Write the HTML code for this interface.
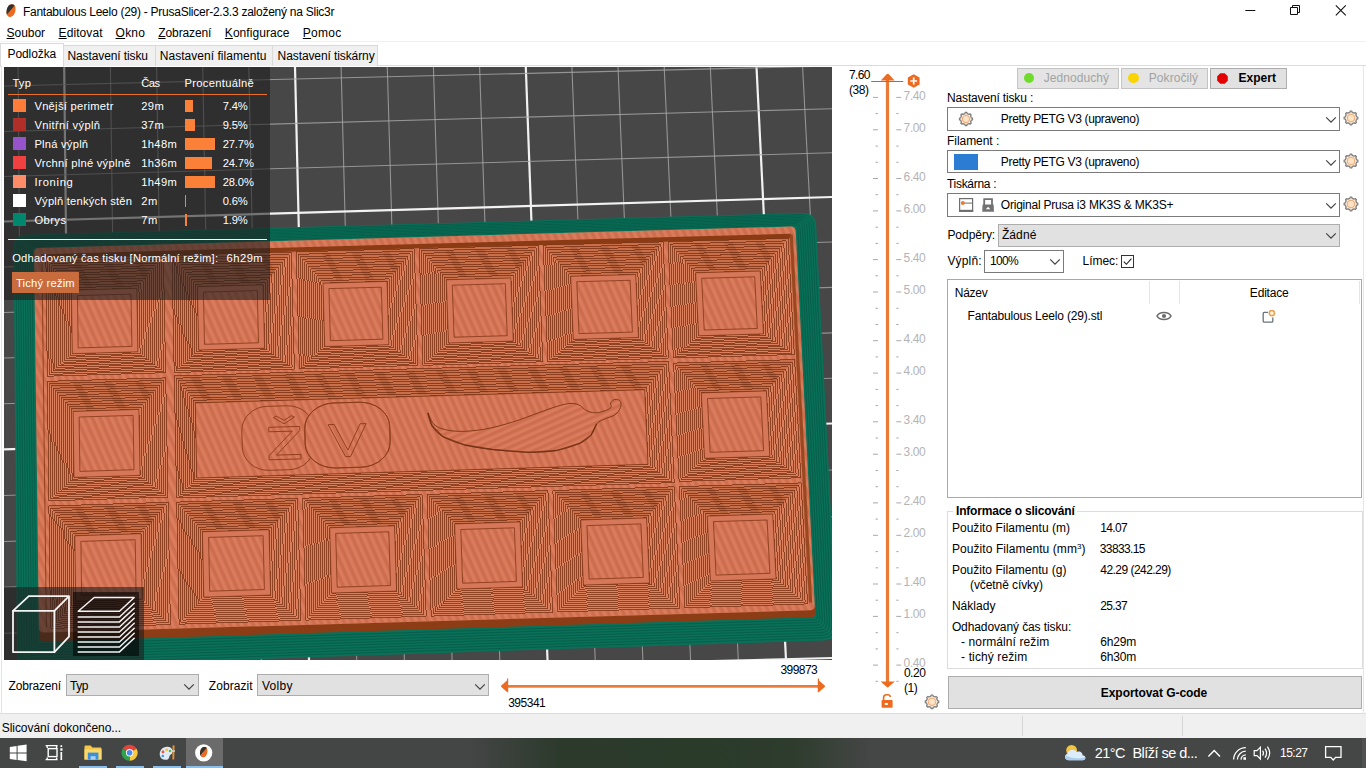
<!DOCTYPE html><html><head><meta charset="utf-8"><title>PrusaSlicer</title><style>
html,body{margin:0;padding:0}
body{width:1366px;height:776px;position:relative;overflow:hidden;background:#fff;font-family:"Liberation Sans",sans-serif;font-size:12px;color:#000}
.a{position:absolute}
.t{position:absolute;white-space:nowrap;line-height:16px;height:16px}
u{text-decoration:underline;text-underline-offset:1px}
.btn{position:absolute;background:#e1e1e1;border:1px solid #adadad;box-sizing:border-box}
.cmb{position:absolute;background:#fff;border:1px solid #7a7a7a;box-sizing:border-box}
</style></head><body>
<div class="a" style="left:0;top:0;width:1366px;height:738px;background:#fff"></div>
<svg class="a" style="left:5.0px;top:4.0px" width="12.5" height="13.5" viewBox="0 0 10 13"><defs><clipPath id="lg"><path d="M5.6 0.2 C8.6 0.2 9.6 3.4 9 6.6 C8.5 9.6 6.6 12.6 3.6 12.4 C0.8 12.2 0 9 0.6 6 C1.2 3 2.8 0.2 5.6 0.2 Z"/></clipPath></defs><g clip-path="url(#lg)"><rect width="10" height="13" fill="#ed6b21"/><path d="M-1 -1 H10.5 L0.3 10.6 L-1 10 Z" fill="#2e3233"/></g></svg>
<svg class="a" style="left:1240px;top:0" width="120" height="22" viewBox="0 0 120 22"><path d="M5.3 10.5 H15.3" stroke="#111" stroke-width="1"/><path d="M50.5 7.5 H57.5 V14.5 H50.5 Z M52.5 7.5 V5.5 H59.5 V12.5 H57.5" fill="none" stroke="#111" stroke-width="1"/><path d="M95.8 5.3 L105.8 15.3 M105.8 5.3 L95.8 15.3" stroke="#111" stroke-width="1.1"/></svg>
<div class="a" style="left:0;top:41px;width:1366px;height:2px;background:#f1f1f1"></div>
<div class="a" style="left:0;top:42px;width:1366px;height:24px;background:#fff"></div>
<div class="a" style="left:0;top:65px;width:1366px;height:1px;background:#dcdcdc"></div>
<div class="a" style="left:63px;top:45px;width:315px;height:21px;background:#f0f0f0;border:1px solid #dadada;border-bottom:none;box-sizing:border-box"></div>
<div class="a" style="left:154.5px;top:45px;width:1px;height:21px;background:#dadada"></div>
<div class="a" style="left:271.7px;top:45px;width:1px;height:21px;background:#dadada"></div>
<div class="a" style="left:0;top:43px;width:64px;height:24px;background:#fff;border:1px solid #dadada;border-bottom:none;box-sizing:border-box"></div>
<div class="a" style="left:1px;top:66px;width:1px;height:648px;background:#e3e3e3"></div>
<div class="a" style="left:0;top:713px;width:1366px;height:1px;background:#dcdcdc"></div>
<div class="a" style="left:0;top:714px;width:1366px;height:24px;background:#f0f0f0"></div>
<div class="a" style="left:1022px;top:716px;width:1px;height:20px;background:#d7d7d7"></div>
<div class="a" style="left:1182px;top:716px;width:1px;height:20px;background:#d7d7d7"></div>
<svg width="1366" height="776" viewBox="0 0 1366 776" style="position:absolute;left:0;top:0">
<defs>
<clipPath id="cv"><rect x="4" y="67" width="828" height="593"/></clipPath>
<pattern id="stripe" width="7" height="7" patternUnits="userSpaceOnUse" patternTransform="rotate(66)"><rect x="0" y="0" width="7" height="3.5" fill="#b95a3c" opacity="0.42"/></pattern>
<pattern id="stripe2" width="6.4" height="6.4" patternUnits="userSpaceOnUse" patternTransform="rotate(-24)"><rect x="0" y="0" width="6.4" height="3.2" fill="#b95a3c" opacity="0.42"/></pattern>
<style>.gt{stroke:#a8a8a8;stroke-width:1.1;opacity:.8}.gT{stroke:#f2f2f2;stroke-width:2.2}</style>
</defs>
<g clip-path="url(#cv)">
<rect x="4" y="67" width="828" height="593" fill="#474747"/>
<line x1="-28.1" y1="67" x2="-24.9" y2="660" class="gt"/>
<line x1="18.1" y1="67" x2="22.8" y2="660" class="gt"/>
<line x1="64.2" y1="67" x2="70.5" y2="660" class="gT"/>
<line x1="110.4" y1="67" x2="118.2" y2="660" class="gt"/>
<line x1="156.6" y1="67" x2="165.9" y2="660" class="gt"/>
<line x1="202.7" y1="67" x2="213.6" y2="660" class="gt"/>
<line x1="248.8" y1="67" x2="261.3" y2="660" class="gt"/>
<line x1="295.0" y1="67" x2="309.0" y2="660" class="gT"/>
<line x1="341.1" y1="67" x2="356.7" y2="660" class="gt"/>
<line x1="387.3" y1="67" x2="404.4" y2="660" class="gt"/>
<line x1="433.4" y1="67" x2="452.1" y2="660" class="gt"/>
<line x1="479.6" y1="67" x2="499.8" y2="660" class="gt"/>
<line x1="525.8" y1="67" x2="547.5" y2="660" class="gT"/>
<line x1="571.9" y1="67" x2="595.2" y2="660" class="gt"/>
<line x1="618.0" y1="67" x2="642.9" y2="660" class="gt"/>
<line x1="664.2" y1="67" x2="690.6" y2="660" class="gt"/>
<line x1="710.3" y1="67" x2="738.3" y2="660" class="gt"/>
<line x1="756.5" y1="67" x2="786.0" y2="660" class="gT"/>
<line x1="802.6" y1="67" x2="833.7" y2="660" class="gt"/>
<line x1="848.8" y1="67" x2="881.4" y2="660" class="gt"/>
<line x1="4" y1="41.0" x2="832" y2="23.0" class="gt"/>
<line x1="4" y1="86.0" x2="832" y2="66.0" class="gt"/>
<line x1="4" y1="131.5" x2="832" y2="108.7" class="gt"/>
<line x1="4" y1="176.5" x2="832" y2="152.7" class="gt"/>
<line x1="4" y1="221.5" x2="832" y2="197.0" class="gT"/>
<line x1="4" y1="267.0" x2="832" y2="242.0" class="gt"/>
<line x1="4" y1="312.5" x2="832" y2="287.4" class="gt"/>
<line x1="4" y1="358.0" x2="832" y2="332.9" class="gt"/>
<line x1="4" y1="403.7" x2="832" y2="378.2" class="gt"/>
<line x1="4" y1="449.4" x2="832" y2="423.5" class="gT"/>
<line x1="4" y1="495.5" x2="832" y2="470.0" class="gt"/>
<line x1="4" y1="541.5" x2="832" y2="516.8" class="gt"/>
<line x1="4" y1="587.3" x2="832" y2="563.7" class="gt"/>
<line x1="4" y1="633.2" x2="832" y2="610.7" class="gt"/>
<line x1="4" y1="679.5" x2="832" y2="658.0" class="gT"/>
<path d="M13.6 248.0 Q13.5 235.0 26.5 234.6 L802.5 213.0 Q815.5 212.6 816.2 225.6 L836.8 627.0 Q837.5 640.0 824.5 640.4 L30.0 666.6 Q17.0 667.0 16.9 654.0 Z" fill="#0a7058"/>
<path d="M15.9 249.0 Q15.8 236.4 28.3 236.1 L800.7 214.5 Q813.3 214.1 813.9 226.7 L834.4 624.9 Q835.0 637.5 822.5 637.9 L32.0 663.8 Q19.4 664.2 19.3 651.6 Z" fill="none" stroke="#065a47" stroke-width="0.9" opacity="0.85"/>
<path d="M18.2 249.0 Q18.1 237.9 29.2 237.6 L799.9 216.0 Q811.0 215.7 811.6 226.8 L831.9 623.8 Q832.5 634.9 821.4 635.3 L33.0 661.0 Q21.9 661.4 21.8 650.2 Z" fill="none" stroke="#065a47" stroke-width="0.9" opacity="0.85"/>
<path d="M20.4 249.0 Q20.3 239.3 30.0 239.1 L799.1 217.5 Q808.8 217.2 809.3 226.9 L829.5 622.7 Q830.0 632.4 820.3 632.7 L34.0 658.2 Q24.3 658.5 24.2 648.9 Z" fill="none" stroke="#065a47" stroke-width="0.9" opacity="0.85"/>
<path d="M22.7 249.0 Q22.6 240.8 30.8 240.5 L798.3 219.0 Q806.6 218.8 807.0 227.0 L827.1 621.7 Q827.5 629.9 819.3 630.1 L35.0 655.4 Q26.8 655.7 26.7 647.5 Z" fill="none" stroke="#065a47" stroke-width="0.9" opacity="0.85"/>
<path d="M25.0 249.0 Q24.9 242.2 31.7 242.0 L797.6 220.5 Q804.3 220.3 804.7 227.1 L824.7 620.6 Q825.0 627.3 818.2 627.6 L36.0 652.7 Q29.2 652.9 29.2 646.1 Z" fill="none" stroke="#065a47" stroke-width="0.9" opacity="0.85"/>
<path d="M27.2 249.0 Q27.2 243.7 32.5 243.5 L796.8 222.0 Q802.1 221.9 802.4 227.2 L822.2 619.5 Q822.5 624.8 817.2 625.0 L37.0 649.9 Q31.7 650.1 31.6 644.7 Z" fill="none" stroke="#065a47" stroke-width="0.9" opacity="0.85"/>
<path d="M29.5 249.0 Q29.4 245.1 33.3 245.0 L796.0 223.5 Q799.9 223.4 800.1 227.3 L819.8 618.4 Q820.0 622.3 816.1 622.4 L38.0 647.1 Q34.1 647.2 34.1 643.4 Z" fill="none" stroke="#065a47" stroke-width="0.9" opacity="0.85"/>
<path d="M31.8 249.0 Q31.7 246.6 34.2 246.5 L795.2 225.0 Q797.6 225.0 797.8 227.4 L817.4 617.3 Q817.5 619.7 815.1 619.8 L39.0 644.3 Q36.6 644.4 36.5 642.0 Z" fill="none" stroke="#065a47" stroke-width="0.9" opacity="0.85"/>
<path d="M39.2 630.6 Q39.0 626.6 43.0 626.5 L811.0 604.3 Q815.0 604.2 815.2 608.2 L815.3 613.2 Q815.5 617.2 811.5 617.3 L43.8 641.5 Q39.8 641.6 39.6 637.6 Z" fill="#8c3d16"/>
<path d="M34.1 253.0 Q34.0 248.0 39.0 247.9 L790.4 226.6 Q795.4 226.5 795.7 231.5 L814.7 605.2 Q815.0 610.2 810.0 610.3 L44.0 632.5 Q39.0 632.6 38.9 627.6 Z" fill="#da7c5c"/>
<path d="M34.1 253.0 Q34.0 248.0 39.0 247.9 L790.4 226.6 Q795.4 226.5 795.7 231.5 L814.7 605.2 Q815.0 610.2 810.0 610.3 L44.0 632.5 Q39.0 632.6 38.9 627.6 Z" fill="url(#stripe)"/>
<polygon points="42.1,258.8 789.6,238.4 809.0,602.6 46.6,627.3" fill="#dc7e5d"/>
<polygon points="42.1,258.8 789.6,238.4 809.0,602.6 46.6,627.3" fill="url(#stripe)"/>
<polygon points="41.1,254.2 791.1,233.8 791.1,238.2 41.1,258.6" fill="#8a3b14"/>
<polygon points="789.6,234.4 792.8,234.4 812.2,602.6 809.0,602.6" fill="#9a4820"/>
<path d="M41.9 255.8 L46.4 627.3" stroke="#8a3b14" stroke-width="0.9"/>
<polygon points="45.9,258.7 163.4,255.5 165.6,372.7 47.3,376.2" fill="#db7f5c"/>
<polygon points="172.0,255.3 291.3,252.0 294.4,369.0 174.2,372.5" fill="#db7f5c"/>
<polygon points="296.3,251.9 414.2,248.6 418.0,365.4 299.4,368.9" fill="#db7f5c"/>
<polygon points="419.2,248.5 538.2,245.3 542.8,361.8 423.0,365.3" fill="#db7f5c"/>
<polygon points="543.2,245.1 663.0,241.9 668.4,358.2 547.8,361.7" fill="#db7f5c"/>
<polygon points="668.0,241.7 788.1,238.4 794.3,354.5 673.4,358.0" fill="#db7f5c"/>
<polygon points="47.4,381.3 165.7,377.9 168.0,497.1 48.9,500.8" fill="#db7f5c"/>
<polygon points="673.6,363.1 794.6,359.6 800.8,477.7 679.1,481.4" fill="#db7f5c"/>
<polygon points="48.9,506.0 168.1,502.3 170.4,624.5 50.5,628.4" fill="#db7f5c"/>
<polygon points="176.7,502.1 297.7,498.3 300.8,620.3 179.1,624.2" fill="#db7f5c"/>
<polygon points="302.7,498.2 422.2,494.5 426.2,616.2 305.9,620.1" fill="#db7f5c"/>
<polygon points="427.2,494.4 547.9,490.6 552.6,612.1 431.2,616.1" fill="#db7f5c"/>
<polygon points="552.9,490.5 674.3,486.8 680.0,608.0 557.7,612.0" fill="#db7f5c"/>
<polygon points="679.4,486.6 801.1,482.9 807.5,603.9 685.0,607.8" fill="#db7f5c"/>
<polygon points="174.3,375.8 668.5,361.4 674.2,482.6 176.6,497.9" fill="#db7f5c"/>
<polygon points="45.9,258.7 163.4,255.5 136.8,288.3 71.4,290.2" fill="#8a3b14" opacity="0.22"/>
<polygon points="172.0,255.3 291.3,252.0 263.1,284.8 197.4,286.7" fill="#8a3b14" opacity="0.22"/>
<polygon points="296.3,251.9 414.2,248.6 387.0,281.4 323.0,283.2" fill="#8a3b14" opacity="0.22"/>
<polygon points="419.2,248.5 538.2,245.3 510.9,278.0 446.3,279.8" fill="#8a3b14" opacity="0.22"/>
<polygon points="543.2,245.1 663.0,241.9 635.7,274.5 570.7,276.3" fill="#8a3b14" opacity="0.22"/>
<polygon points="668.0,241.7 788.1,238.4 760.2,271.0 695.6,272.8" fill="#8a3b14" opacity="0.22"/>
<polygon points="47.4,381.3 165.7,377.9 138.9,409.4 73.1,411.4" fill="#8a3b14" opacity="0.22"/>
<polygon points="673.6,363.1 794.6,359.6 766.4,390.9 701.3,392.9" fill="#8a3b14" opacity="0.22"/>
<polygon points="48.9,506.0 168.1,502.3 141.1,533.7 74.8,535.8" fill="#8a3b14" opacity="0.22"/>
<polygon points="176.7,502.1 297.7,498.3 269.0,529.7 202.4,531.8" fill="#8a3b14" opacity="0.22"/>
<polygon points="302.7,498.2 422.2,494.5 394.5,525.8 329.7,527.8" fill="#8a3b14" opacity="0.22"/>
<polygon points="427.2,494.4 547.9,490.6 520.1,521.9 454.6,523.9" fill="#8a3b14" opacity="0.22"/>
<polygon points="552.9,490.5 674.3,486.8 646.6,517.9 580.7,520.0" fill="#8a3b14" opacity="0.22"/>
<polygon points="679.4,486.6 801.1,482.9 772.7,514.0 707.2,516.1" fill="#8a3b14" opacity="0.22"/>
<polygon points="174.3,375.8 668.5,361.4 644.7,389.7 195.3,402.9" fill="#8a3b14" opacity="0.22"/>
<g fill="none" stroke="#702a0c" stroke-width="0.8" opacity="0.88" shape-rendering="crispEdges">
<polygon points="45.9,258.7 163.4,255.5 165.6,372.7 47.3,376.2"/>
<polygon points="47.8,261.1 161.4,258.0 163.5,371.1 49.2,374.4"/>
<polygon points="49.8,263.5 159.3,260.5 161.4,369.5 51.2,372.7"/>
<polygon points="51.8,266.0 157.3,263.1 159.2,367.9 53.1,371.0"/>
<polygon points="53.7,268.4 155.2,265.6 157.1,366.3 55.0,369.3"/>
<polygon points="55.7,270.8 153.2,268.1 155.0,364.7 56.9,367.5"/>
<polygon points="57.7,273.2 151.2,270.6 152.8,363.1 58.9,365.8"/>
<polygon points="59.6,275.6 149.1,273.2 150.7,361.5 60.8,364.1"/>
<polygon points="61.6,278.1 147.1,275.7 148.6,359.9 62.7,362.4"/>
<polygon points="63.6,280.5 145.0,278.2 146.5,358.3 64.6,360.6"/>
<polygon points="65.5,282.9 143.0,280.8 144.3,356.7 66.5,358.9"/>
<polygon points="67.5,285.3 140.9,283.3 142.2,355.1 68.5,357.2"/>
<polygon points="69.5,287.7 138.9,285.8 140.1,353.5 70.4,355.4"/>
<polygon points="71.4,290.2 136.8,288.3 137.9,351.8 72.3,353.7"/>
<polygon points="172.0,255.3 291.3,252.0 294.4,369.0 174.2,372.5"/>
<polygon points="173.9,257.7 289.2,254.5 292.1,367.4 176.1,370.8"/>
<polygon points="175.9,260.1 287.0,257.0 289.8,365.8 178.0,369.0"/>
<polygon points="177.8,262.5 284.8,259.6 287.5,364.2 179.9,367.3"/>
<polygon points="179.8,264.9 282.7,262.1 285.2,362.6 181.8,365.6"/>
<polygon points="181.7,267.3 280.5,264.6 282.9,361.0 183.6,363.9"/>
<polygon points="183.7,269.8 278.3,267.2 280.6,359.4 185.5,362.2"/>
<polygon points="185.6,272.2 276.1,269.7 278.3,357.8 187.4,360.4"/>
<polygon points="187.6,274.6 274.0,272.2 276.0,356.2 189.3,358.7"/>
<polygon points="189.5,277.0 271.8,274.7 273.8,354.6 191.2,357.0"/>
<polygon points="191.5,279.4 269.6,277.3 271.5,353.0 193.0,355.3"/>
<polygon points="193.5,281.8 267.4,279.8 269.2,351.4 194.9,353.5"/>
<polygon points="195.4,284.2 265.3,282.3 266.9,349.8 196.8,351.8"/>
<polygon points="197.4,286.7 263.1,284.8 264.6,348.2 198.7,350.1"/>
<polygon points="296.3,251.9 414.2,248.6 418.0,365.4 299.4,368.9"/>
<polygon points="298.4,254.3 412.1,251.2 415.8,363.8 301.3,367.1"/>
<polygon points="300.4,256.7 410.0,253.7 413.5,362.2 303.3,365.4"/>
<polygon points="302.5,259.1 407.9,256.2 411.3,360.6 305.2,363.7"/>
<polygon points="304.5,261.5 405.8,258.7 409.1,359.0 307.2,362.0"/>
<polygon points="306.6,263.9 403.7,261.2 406.8,357.4 309.1,360.3"/>
<polygon points="308.6,266.3 401.6,263.8 404.6,355.8 311.1,358.5"/>
<polygon points="310.7,268.7 399.6,266.3 402.3,354.2 313.0,356.8"/>
<polygon points="312.7,271.1 397.5,268.8 400.1,352.7 315.0,355.1"/>
<polygon points="314.8,273.5 395.4,271.3 397.9,351.1 316.9,353.4"/>
<polygon points="316.8,276.0 393.3,273.8 395.6,349.5 318.9,351.7"/>
<polygon points="318.9,278.4 391.2,276.4 393.4,347.9 320.8,349.9"/>
<polygon points="320.9,280.8 389.1,278.9 391.2,346.3 322.8,348.2"/>
<polygon points="323.0,283.2 387.0,281.4 388.9,344.7 324.7,346.5"/>
<polygon points="419.2,248.5 538.2,245.3 542.8,361.8 423.0,365.3"/>
<polygon points="421.2,250.9 536.1,247.8 540.5,360.2 424.9,363.6"/>
<polygon points="423.3,253.3 534.0,250.3 538.2,358.6 426.9,361.9"/>
<polygon points="425.4,255.7 531.9,252.8 536.0,357.0 428.9,360.1"/>
<polygon points="427.5,258.1 529.8,255.3 533.7,355.4 430.8,358.4"/>
<polygon points="429.6,260.5 527.7,257.8 531.4,353.9 432.8,356.7"/>
<polygon points="431.7,262.9 525.6,260.4 529.2,352.3 434.7,355.0"/>
<polygon points="433.8,265.3 523.5,262.9 526.9,350.7 436.7,353.3"/>
<polygon points="435.8,267.7 521.4,265.4 524.6,349.1 438.7,351.5"/>
<polygon points="437.9,270.1 519.3,267.9 522.3,347.5 440.6,349.8"/>
<polygon points="440.0,272.5 517.2,270.4 520.1,345.9 442.6,348.1"/>
<polygon points="442.1,274.9 515.1,272.9 517.8,344.3 444.5,346.4"/>
<polygon points="444.2,277.4 513.0,275.4 515.5,342.7 446.5,344.7"/>
<polygon points="446.3,279.8 510.9,278.0 513.3,341.1 448.5,343.0"/>
<polygon points="543.2,245.1 663.0,241.9 668.4,358.2 547.8,361.7"/>
<polygon points="545.3,247.5 660.9,244.4 666.1,356.6 549.8,360.0"/>
<polygon points="547.4,249.9 658.8,246.9 663.8,355.0 551.7,358.2"/>
<polygon points="549.5,252.3 656.7,249.4 661.5,353.4 553.7,356.5"/>
<polygon points="551.6,254.7 654.6,251.9 659.2,351.8 555.6,354.8"/>
<polygon points="553.8,257.1 652.5,254.4 656.9,350.2 557.6,353.1"/>
<polygon points="555.9,259.5 650.4,256.9 654.6,348.6 559.6,351.4"/>
<polygon points="558.0,261.9 648.3,259.4 652.3,347.1 561.5,349.7"/>
<polygon points="560.1,264.3 646.2,261.9 650.0,345.5 563.5,348.0"/>
<polygon points="562.2,266.7 644.1,264.5 647.7,343.9 565.5,346.2"/>
<polygon points="564.3,269.1 642.0,267.0 645.4,342.3 567.4,344.5"/>
<polygon points="566.5,271.5 639.9,269.5 643.1,340.7 569.4,342.8"/>
<polygon points="568.6,273.9 637.8,272.0 640.8,339.1 571.3,341.1"/>
<polygon points="570.7,276.3 635.7,274.5 638.5,337.5 573.3,339.4"/>
<polygon points="668.0,241.7 788.1,238.4 794.3,354.5 673.4,358.0"/>
<polygon points="670.1,244.1 786.0,240.9 791.9,353.0 675.3,356.3"/>
<polygon points="672.2,246.5 783.8,243.5 789.5,351.4 677.3,354.6"/>
<polygon points="674.4,248.9 781.7,246.0 787.2,349.8 679.2,352.9"/>
<polygon points="676.5,251.3 779.5,248.5 784.8,348.2 681.2,351.2"/>
<polygon points="678.6,253.7 777.4,251.0 782.4,346.6 683.1,349.5"/>
<polygon points="680.7,256.1 775.2,253.5 780.0,345.0 685.0,347.8"/>
<polygon points="682.8,258.5 773.1,256.0 777.7,343.4 687.0,346.1"/>
<polygon points="685.0,260.9 771.0,258.5 775.3,341.9 688.9,344.3"/>
<polygon points="687.1,263.3 768.8,261.0 772.9,340.3 690.9,342.6"/>
<polygon points="689.2,265.7 766.7,263.5 770.6,338.7 692.8,340.9"/>
<polygon points="691.3,268.1 764.5,266.0 768.2,337.1 694.7,339.2"/>
<polygon points="693.5,270.4 762.4,268.5 765.8,335.5 696.7,337.5"/>
<polygon points="695.6,272.8 760.2,271.0 763.5,333.9 698.6,335.8"/>
<polygon points="47.4,381.3 165.7,377.9 168.0,497.1 48.9,500.8"/>
<polygon points="49.4,383.6 163.7,380.3 165.8,495.4 50.8,499.0"/>
<polygon points="51.3,385.9 161.6,382.7 163.7,493.8 52.7,497.2"/>
<polygon points="53.3,388.2 159.5,385.1 161.5,492.1 54.7,495.4"/>
<polygon points="55.3,390.6 157.5,387.6 159.4,490.4 56.6,493.6"/>
<polygon points="57.3,392.9 155.4,390.0 157.2,488.8 58.5,491.8"/>
<polygon points="59.2,395.2 153.4,392.4 155.1,487.1 60.5,490.0"/>
<polygon points="61.2,397.5 151.3,394.9 152.9,485.4 62.4,488.2"/>
<polygon points="63.2,399.8 149.2,397.3 150.8,483.8 64.3,486.4"/>
<polygon points="65.2,402.1 147.2,399.7 148.7,482.1 66.3,484.6"/>
<polygon points="67.2,404.4 145.1,402.1 146.5,480.4 68.2,482.8"/>
<polygon points="69.1,406.7 143.1,404.6 144.4,478.8 70.1,481.0"/>
<polygon points="71.1,409.0 141.0,407.0 142.2,477.1 72.1,479.2"/>
<polygon points="73.1,411.4 138.9,409.4 140.1,475.4 74.0,477.4"/>
<polygon points="673.6,363.1 794.6,359.6 800.8,477.7 679.1,481.4"/>
<polygon points="675.8,365.4 792.4,362.0 798.4,476.1 681.1,479.7"/>
<polygon points="677.9,367.7 790.2,364.4 796.1,474.4 683.0,477.9"/>
<polygon points="680.0,370.0 788.1,366.8 793.7,472.8 685.0,476.1"/>
<polygon points="682.2,372.3 785.9,369.3 791.3,471.1 686.9,474.3"/>
<polygon points="684.3,374.6 783.7,371.7 788.9,469.5 688.9,472.5"/>
<polygon points="686.4,376.9 781.6,374.1 786.5,467.8 690.8,470.7"/>
<polygon points="688.5,379.1 779.4,376.5 784.1,466.2 692.8,469.0"/>
<polygon points="690.7,381.4 777.2,378.9 781.7,464.5 694.7,467.2"/>
<polygon points="692.8,383.7 775.1,381.3 779.3,462.9 696.7,465.4"/>
<polygon points="694.9,386.0 772.9,383.7 776.9,461.2 698.6,463.6"/>
<polygon points="697.1,388.3 770.7,386.1 774.5,459.6 700.6,461.8"/>
<polygon points="699.2,390.6 768.6,388.5 772.2,457.9 702.5,460.1"/>
<polygon points="701.3,392.9 766.4,390.9 769.8,456.3 704.5,458.3"/>
<polygon points="48.9,506.0 168.1,502.3 170.4,624.5 50.5,628.4"/>
<polygon points="50.9,508.3 166.0,504.7 168.2,622.6 52.4,626.3"/>
<polygon points="52.9,510.6 163.9,507.1 166.0,620.6 54.3,624.2"/>
<polygon points="54.9,512.9 161.8,509.6 163.9,618.7 56.3,622.2"/>
<polygon points="56.9,515.1 159.8,512.0 161.7,616.7 58.2,620.1"/>
<polygon points="58.9,517.4 157.7,514.4 159.5,614.8 60.2,618.0"/>
<polygon points="60.9,519.7 155.6,516.8 157.4,612.8 62.1,615.9"/>
<polygon points="62.9,522.0 153.5,519.2 155.2,610.9 64.1,613.8"/>
<polygon points="64.8,524.3 151.5,521.6 153.0,609.0 66.0,611.8"/>
<polygon points="66.8,526.6 149.4,524.0 150.9,607.0 68.0,609.7"/>
<polygon points="68.8,528.9 147.3,526.5 148.7,605.1 69.9,607.6"/>
<polygon points="70.8,531.2 145.2,528.9 146.6,603.1 71.8,605.5"/>
<polygon points="72.8,533.5 143.2,531.3 144.4,601.2 73.8,603.4"/>
<polygon points="74.8,535.8 141.1,533.7 142.2,599.2 75.7,601.3"/>
<polygon points="176.7,502.1 297.7,498.3 300.8,620.3 179.1,624.2"/>
<polygon points="178.7,504.3 295.5,500.7 298.5,618.4 181.0,622.2"/>
<polygon points="180.7,506.6 293.3,503.2 296.2,616.4 182.9,620.1"/>
<polygon points="182.6,508.9 291.1,505.6 293.8,614.5 184.8,618.0"/>
<polygon points="184.6,511.2 288.9,508.0 291.5,612.5 186.7,615.9"/>
<polygon points="186.6,513.5 286.7,510.4 289.2,610.6 188.6,613.9"/>
<polygon points="188.6,515.8 284.5,512.8 286.9,608.7 190.5,611.8"/>
<polygon points="190.6,518.1 282.3,515.2 284.5,606.7 192.4,609.7"/>
<polygon points="192.5,520.4 280.1,517.6 282.2,604.8 194.3,607.6"/>
<polygon points="194.5,522.6 277.8,520.1 279.9,602.9 196.2,605.5"/>
<polygon points="196.5,524.9 275.6,522.5 277.6,600.9 198.1,603.5"/>
<polygon points="198.5,527.2 273.4,524.9 275.2,599.0 200.0,601.4"/>
<polygon points="200.4,529.5 271.2,527.3 272.9,597.0 201.9,599.3"/>
<polygon points="202.4,531.8 269.0,529.7 270.6,595.1 203.8,597.2"/>
<polygon points="302.7,498.2 422.2,494.5 426.2,616.2 305.9,620.1"/>
<polygon points="304.8,500.5 420.1,496.9 423.9,614.3 307.9,618.1"/>
<polygon points="306.9,502.7 418.0,499.3 421.6,612.4 309.9,616.0"/>
<polygon points="309.0,505.0 415.8,501.7 419.3,610.4 311.8,613.9"/>
<polygon points="311.0,507.3 413.7,504.1 417.1,608.5 313.8,611.8"/>
<polygon points="313.1,509.6 411.6,506.5 414.8,606.6 315.8,609.8"/>
<polygon points="315.2,511.9 409.4,508.9 412.5,604.6 317.7,607.7"/>
<polygon points="317.2,514.1 407.3,511.4 410.2,602.7 319.7,605.6"/>
<polygon points="319.3,516.4 405.2,513.8 407.9,600.7 321.7,603.5"/>
<polygon points="321.4,518.7 403.1,516.2 405.7,598.8 323.6,601.4"/>
<polygon points="323.5,521.0 400.9,518.6 403.4,596.9 325.6,599.4"/>
<polygon points="325.6,523.3 398.8,521.0 401.1,594.9 327.6,597.3"/>
<polygon points="327.6,525.5 396.7,523.4 398.8,593.0 329.5,595.2"/>
<polygon points="329.7,527.8 394.5,525.8 396.6,591.1 331.5,593.1"/>
<polygon points="427.2,494.4 547.9,490.6 552.6,612.1 431.2,616.1"/>
<polygon points="429.3,496.6 545.7,493.0 550.3,610.2 433.2,614.0"/>
<polygon points="431.4,498.9 543.6,495.4 548.0,608.3 435.2,611.9"/>
<polygon points="433.5,501.2 541.5,497.9 545.7,606.3 437.1,609.9"/>
<polygon points="435.6,503.5 539.3,500.3 543.4,604.4 439.1,607.8"/>
<polygon points="437.8,505.7 537.2,502.7 541.1,602.5 441.1,605.7"/>
<polygon points="439.9,508.0 535.1,505.1 538.7,600.5 443.1,603.6"/>
<polygon points="442.0,510.3 532.9,507.5 536.4,598.6 445.0,601.6"/>
<polygon points="444.1,512.6 530.8,509.9 534.1,596.7 447.0,599.5"/>
<polygon points="446.2,514.8 528.7,512.3 531.8,594.8 449.0,597.4"/>
<polygon points="448.3,517.1 526.5,514.7 529.5,592.8 451.0,595.3"/>
<polygon points="450.4,519.4 524.4,517.1 527.2,590.9 452.9,593.3"/>
<polygon points="452.5,521.7 522.2,519.5 524.9,589.0 454.9,591.2"/>
<polygon points="454.6,523.9 520.1,521.9 522.6,587.0 456.9,589.1"/>
<polygon points="552.9,490.5 674.3,486.8 680.0,608.0 557.7,612.0"/>
<polygon points="555.0,492.8 672.2,489.2 677.6,606.1 559.7,609.9"/>
<polygon points="557.2,495.0 670.1,491.6 675.3,604.2 561.7,607.8"/>
<polygon points="559.3,497.3 668.0,494.0 672.9,602.2 563.6,605.8"/>
<polygon points="561.5,499.6 665.8,496.3 670.6,600.3 565.6,603.7"/>
<polygon points="563.6,501.8 663.7,498.7 668.2,598.4 567.6,601.6"/>
<polygon points="565.7,504.1 661.6,501.1 665.9,596.4 569.6,599.6"/>
<polygon points="567.9,506.4 659.4,503.5 663.5,594.5 571.5,597.5"/>
<polygon points="570.0,508.7 657.3,505.9 661.2,592.6 573.5,595.4"/>
<polygon points="572.1,510.9 655.1,508.3 658.9,590.7 575.5,593.3"/>
<polygon points="574.3,513.2 653.0,510.7 656.5,588.7 577.5,591.3"/>
<polygon points="576.4,515.5 650.9,513.1 654.2,586.8 579.4,589.2"/>
<polygon points="578.6,517.7 648.7,515.5 651.8,584.9 581.4,587.1"/>
<polygon points="580.7,520.0 646.6,517.9 649.5,583.0 583.4,585.1"/>
<polygon points="679.4,486.6 801.1,482.9 807.5,603.9 685.0,607.8"/>
<polygon points="681.5,488.9 798.9,485.3 805.1,602.0 687.0,605.8"/>
<polygon points="683.7,491.1 796.8,487.6 802.7,600.0 688.9,603.7"/>
<polygon points="685.8,493.4 794.6,490.0 800.3,598.1 690.9,601.6"/>
<polygon points="688.0,495.7 792.4,492.4 797.9,596.2 692.8,599.6"/>
<polygon points="690.1,497.9 790.2,494.8 795.4,594.3 694.8,597.5"/>
<polygon points="692.2,500.2 788.0,497.2 793.0,592.3 696.7,595.5"/>
<polygon points="694.4,502.5 785.8,499.6 790.6,590.4 698.7,593.4"/>
<polygon points="696.5,504.7 783.7,502.0 788.2,588.5 700.6,591.3"/>
<polygon points="698.7,507.0 781.5,504.4 785.8,586.6 702.6,589.3"/>
<polygon points="700.8,509.3 779.3,506.8 783.3,584.7 704.5,587.2"/>
<polygon points="703.0,511.5 777.1,509.2 780.9,582.7 706.5,585.1"/>
<polygon points="705.1,513.8 774.9,511.6 778.5,580.8 708.4,583.1"/>
<polygon points="707.2,516.1 772.7,514.0 776.1,578.9 710.4,581.0"/>
<polygon points="174.3,375.8 668.5,361.4 674.2,482.6 176.6,497.9"/>
<polygon points="176.2,378.2 666.4,364.0 671.8,481.0 178.5,496.1"/>
<polygon points="178.1,380.7 664.2,366.6 669.4,479.3 180.3,494.3"/>
<polygon points="180.0,383.2 662.0,369.1 667.0,477.6 182.2,492.5"/>
<polygon points="181.9,385.6 659.9,371.7 664.6,476.0 184.0,490.7"/>
<polygon points="183.8,388.1 657.7,374.3 662.3,474.3 185.8,488.9"/>
<polygon points="185.7,390.6 655.5,376.8 659.9,472.6 187.7,487.1"/>
<polygon points="187.7,393.0 653.4,379.4 657.5,471.0 189.5,485.3"/>
<polygon points="189.6,395.5 651.2,382.0 655.1,469.3 191.3,483.5"/>
<polygon points="191.5,398.0 649.0,384.6 652.8,467.7 193.2,481.7"/>
<polygon points="193.4,400.4 646.8,387.1 650.4,466.0 195.0,479.9"/>
<polygon points="195.3,402.9 644.7,389.7 648.0,464.3 196.8,478.0"/>
</g>
<g fill="#5e240a" opacity="0.17">
<polygon points="71.0,260.6 78.6,260.4 92.8,287.3 85.2,287.5"/>
<polygon points="101.2,259.8 110.0,259.5 124.2,286.4 115.4,286.7"/>
<polygon points="132.6,258.9 140.1,258.7 149.0,275.2 144.4,281.1"/>
<polygon points="196.8,257.1 204.3,256.9 218.8,283.8 211.2,284.0"/>
<polygon points="227.0,256.3 235.9,256.1 250.4,282.9 241.6,283.2"/>
<polygon points="258.6,255.5 266.2,255.3 275.2,271.7 270.6,277.6"/>
<polygon points="322.2,253.7 329.5,253.5 343.8,280.4 336.5,280.6"/>
<polygon points="351.7,252.9 360.3,252.7 374.6,279.5 366.0,279.7"/>
<polygon points="382.4,252.1 389.7,251.9 398.7,268.3 394.2,274.2"/>
<polygon points="445.3,250.4 452.7,250.2 467.3,276.9 459.9,277.1"/>
<polygon points="475.0,249.5 483.7,249.3 498.4,276.1 489.7,276.3"/>
<polygon points="506.1,248.7 513.5,248.5 522.6,264.9 518.2,270.7"/>
<polygon points="569.5,247.0 577.0,246.8 591.9,273.5 584.4,273.7"/>
<polygon points="599.5,246.1 608.2,245.9 623.1,272.6 614.4,272.9"/>
<polygon points="630.7,245.3 638.2,245.1 647.5,261.4 643.0,267.3"/>
<polygon points="694.2,243.6 701.6,243.4 716.6,270.0 709.1,270.2"/>
<polygon points="724.0,242.7 732.6,242.5 747.7,269.2 739.0,269.4"/>
<polygon points="755.0,241.9 762.4,241.7 771.8,258.0 767.4,263.8"/>
<polygon points="72.7,383.0 80.3,382.8 94.6,408.6 87.0,408.8"/>
<polygon points="103.0,382.1 111.9,381.9 126.2,407.6 117.4,407.9"/>
<polygon points="134.7,381.2 142.2,381.0 151.2,396.8 146.5,402.4"/>
<polygon points="700.0,364.8 707.5,364.6 722.5,390.1 715.0,390.3"/>
<polygon points="730.0,363.9 738.7,363.7 753.8,389.2 745.0,389.4"/>
<polygon points="761.2,363.0 768.7,362.8 778.1,378.4 773.7,384.0"/>
<polygon points="74.4,507.6 82.1,507.4 96.4,532.9 88.8,533.2"/>
<polygon points="105.0,506.7 113.9,506.4 128.3,532.0 119.4,532.2"/>
<polygon points="136.8,505.7 144.4,505.5 153.4,521.1 148.8,526.7"/>
<polygon points="201.8,503.7 209.5,503.5 224.1,529.0 216.5,529.2"/>
<polygon points="232.5,502.8 241.5,502.5 256.2,528.0 247.2,528.3"/>
<polygon points="264.5,501.8 272.2,501.6 281.3,517.1 276.7,522.8"/>
<polygon points="328.9,499.8 336.4,499.6 350.8,525.0 343.4,525.3"/>
<polygon points="358.8,498.9 367.5,498.6 382.0,524.1 373.3,524.3"/>
<polygon points="389.9,497.9 397.4,497.7 406.4,513.3 401.9,518.9"/>
<polygon points="453.7,496.0 461.2,495.7 476.0,521.1 468.4,521.4"/>
<polygon points="483.9,495.0 492.7,494.8 507.4,520.2 498.6,520.4"/>
<polygon points="515.3,494.1 522.8,493.8 532.0,509.4 527.5,515.0"/>
<polygon points="579.6,492.1 587.2,491.9 602.2,517.2 594.6,517.4"/>
<polygon points="609.9,491.2 618.8,490.9 633.8,516.2 625.0,516.5"/>
<polygon points="641.6,490.2 649.2,490.0 658.5,505.4 654.0,511.0"/>
<polygon points="705.9,488.2 713.5,488.0 728.6,513.3 721.0,513.5"/>
<polygon points="736.1,487.3 744.9,487.0 760.0,512.3 751.2,512.6"/>
<polygon points="767.5,486.3 775.1,486.1 784.5,501.5 780.1,507.1"/>
<polygon points="190.3,377.5 199.2,377.3 212.4,400.5 203.5,400.7"/>
<polygon points="221.5,376.6 230.4,376.3 243.6,399.5 234.7,399.8"/>
<polygon points="252.6,375.7 261.5,375.4 274.8,398.6 265.9,398.9"/>
<polygon points="283.7,374.8 292.6,374.5 305.7,397.7 297.0,398.0"/>
<polygon points="314.3,373.9 323.0,373.7 336.0,396.8 327.4,397.1"/>
<polygon points="344.6,373.0 353.3,372.8 366.3,395.9 357.7,396.2"/>
<polygon points="374.9,372.2 383.6,371.9 396.7,395.1 388.0,395.3"/>
<polygon points="405.2,371.3 413.9,371.0 427.1,394.2 418.3,394.4"/>
<polygon points="435.6,370.4 444.4,370.1 457.7,393.3 448.9,393.5"/>
<polygon points="466.2,369.5 475.0,369.2 488.3,392.4 479.6,392.6"/>
<polygon points="496.8,368.6 505.6,368.4 518.9,391.5 510.2,391.7"/>
<polygon points="527.4,367.7 536.1,367.5 549.6,390.6 540.8,390.8"/>
<polygon points="558.1,366.8 566.9,366.6 580.4,389.7 571.6,389.9"/>
<polygon points="588.9,365.9 597.7,365.7 611.2,388.8 602.4,389.0"/>
<polygon points="619.6,365.1 628.4,364.8 642.1,387.8 633.2,388.1"/>
</g>
<polygon points="71.4,290.2 136.8,288.3 137.9,351.8 72.3,353.7" fill="#d6775a"/>
<polygon points="77.4,295.6 131.0,294.1 131.9,346.4 78.2,347.9" fill="#d97b5c"/>
<polygon points="77.4,295.6 131.0,294.1 131.9,346.4 78.2,347.9" fill="url(#stripe)"/>
<polygon points="71.4,290.2 136.8,288.3 137.9,351.8 72.3,353.7" fill="none" stroke="#7a300f" stroke-width="0.9" opacity="0.75"/>
<polygon points="77.4,295.6 131.0,294.1 131.9,346.4 78.2,347.9" fill="none" stroke="#7a300f" stroke-width="0.9" opacity="0.8"/>
<polygon points="197.4,286.7 263.1,284.8 264.6,348.2 198.7,350.1" fill="#d6775a"/>
<polygon points="203.4,292.1 257.3,290.6 258.5,342.8 204.5,344.3" fill="#d97b5c"/>
<polygon points="203.4,292.1 257.3,290.6 258.5,342.8 204.5,344.3" fill="url(#stripe)"/>
<polygon points="197.4,286.7 263.1,284.8 264.6,348.2 198.7,350.1" fill="none" stroke="#7a300f" stroke-width="0.9" opacity="0.75"/>
<polygon points="203.4,292.1 257.3,290.6 258.5,342.8 204.5,344.3" fill="none" stroke="#7a300f" stroke-width="0.9" opacity="0.8"/>
<polygon points="323.0,283.2 387.0,281.4 388.9,344.7 324.7,346.5" fill="#d6775a"/>
<polygon points="328.9,288.6 381.3,287.2 382.9,339.2 330.4,340.7" fill="#d97b5c"/>
<polygon points="328.9,288.6 381.3,287.2 382.9,339.2 330.4,340.7" fill="url(#stripe)"/>
<polygon points="323.0,283.2 387.0,281.4 388.9,344.7 324.7,346.5" fill="none" stroke="#7a300f" stroke-width="0.9" opacity="0.75"/>
<polygon points="328.9,288.6 381.3,287.2 382.9,339.2 330.4,340.7" fill="none" stroke="#7a300f" stroke-width="0.9" opacity="0.8"/>
<polygon points="446.3,279.8 510.9,278.0 513.3,341.1 448.5,343.0" fill="#d6775a"/>
<polygon points="452.3,285.2 505.3,283.7 507.2,335.7 454.1,337.2" fill="#d97b5c"/>
<polygon points="452.3,285.2 505.3,283.7 507.2,335.7 454.1,337.2" fill="url(#stripe)"/>
<polygon points="446.3,279.8 510.9,278.0 513.3,341.1 448.5,343.0" fill="none" stroke="#7a300f" stroke-width="0.9" opacity="0.75"/>
<polygon points="452.3,285.2 505.3,283.7 507.2,335.7 454.1,337.2" fill="none" stroke="#7a300f" stroke-width="0.9" opacity="0.8"/>
<polygon points="570.7,276.3 635.7,274.5 638.5,337.5 573.3,339.4" fill="#d6775a"/>
<polygon points="576.8,281.7 630.1,280.3 632.4,332.1 579.0,333.6" fill="#d97b5c"/>
<polygon points="576.8,281.7 630.1,280.3 632.4,332.1 579.0,333.6" fill="url(#stripe)"/>
<polygon points="570.7,276.3 635.7,274.5 638.5,337.5 573.3,339.4" fill="none" stroke="#7a300f" stroke-width="0.9" opacity="0.75"/>
<polygon points="576.8,281.7 630.1,280.3 632.4,332.1 579.0,333.6" fill="none" stroke="#7a300f" stroke-width="0.9" opacity="0.8"/>
<polygon points="695.6,272.8 760.2,271.0 763.5,333.9 698.6,335.8" fill="#d6775a"/>
<polygon points="701.7,278.3 754.7,276.8 757.3,328.5 704.2,330.0" fill="#d97b5c"/>
<polygon points="701.7,278.3 754.7,276.8 757.3,328.5 704.2,330.0" fill="url(#stripe)"/>
<polygon points="695.6,272.8 760.2,271.0 763.5,333.9 698.6,335.8" fill="none" stroke="#7a300f" stroke-width="0.9" opacity="0.75"/>
<polygon points="701.7,278.3 754.7,276.8 757.3,328.5 704.2,330.0" fill="none" stroke="#7a300f" stroke-width="0.9" opacity="0.8"/>
<polygon points="73.1,411.4 138.9,409.4 140.1,475.4 74.0,477.4" fill="#d6775a"/>
<polygon points="79.1,417.0 133.1,415.4 134.0,469.7 79.9,471.4" fill="#d97b5c"/>
<polygon points="79.1,417.0 133.1,415.4 134.0,469.7 79.9,471.4" fill="url(#stripe)"/>
<polygon points="73.1,411.4 138.9,409.4 140.1,475.4 74.0,477.4" fill="none" stroke="#7a300f" stroke-width="0.9" opacity="0.75"/>
<polygon points="79.1,417.0 133.1,415.4 134.0,469.7 79.9,471.4" fill="none" stroke="#7a300f" stroke-width="0.9" opacity="0.8"/>
<polygon points="701.3,392.9 766.4,390.9 769.8,456.3 704.5,458.3" fill="#d6775a"/>
<polygon points="707.5,398.5 760.8,396.9 763.6,450.7 710.1,452.3" fill="#d97b5c"/>
<polygon points="707.5,398.5 760.8,396.9 763.6,450.7 710.1,452.3" fill="url(#stripe)"/>
<polygon points="701.3,392.9 766.4,390.9 769.8,456.3 704.5,458.3" fill="none" stroke="#7a300f" stroke-width="0.9" opacity="0.75"/>
<polygon points="707.5,398.5 760.8,396.9 763.6,450.7 710.1,452.3" fill="none" stroke="#7a300f" stroke-width="0.9" opacity="0.8"/>
<polygon points="74.8,535.8 141.1,533.7 142.2,599.2 75.7,601.3" fill="#d6775a"/>
<polygon points="80.9,541.4 135.2,539.7 136.1,593.6 81.6,595.3" fill="#d97b5c"/>
<polygon points="80.9,541.4 135.2,539.7 136.1,593.6 81.6,595.3" fill="url(#stripe)"/>
<polygon points="74.8,535.8 141.1,533.7 142.2,599.2 75.7,601.3" fill="none" stroke="#7a300f" stroke-width="0.9" opacity="0.75"/>
<polygon points="80.9,541.4 135.2,539.7 136.1,593.6 81.6,595.3" fill="none" stroke="#7a300f" stroke-width="0.9" opacity="0.8"/>
<polygon points="202.4,531.8 269.0,529.7 270.6,595.1 203.8,597.2" fill="#d6775a"/>
<polygon points="208.6,537.4 263.1,535.7 264.4,589.5 209.7,591.2" fill="#d97b5c"/>
<polygon points="208.6,537.4 263.1,535.7 264.4,589.5 209.7,591.2" fill="url(#stripe)"/>
<polygon points="202.4,531.8 269.0,529.7 270.6,595.1 203.8,597.2" fill="none" stroke="#7a300f" stroke-width="0.9" opacity="0.75"/>
<polygon points="208.6,537.4 263.1,535.7 264.4,589.5 209.7,591.2" fill="none" stroke="#7a300f" stroke-width="0.9" opacity="0.8"/>
<polygon points="329.7,527.8 394.5,525.8 396.6,591.1 331.5,593.1" fill="#d6775a"/>
<polygon points="335.7,533.4 388.8,531.8 390.5,585.5 337.2,587.2" fill="#d97b5c"/>
<polygon points="335.7,533.4 388.8,531.8 390.5,585.5 337.2,587.2" fill="url(#stripe)"/>
<polygon points="329.7,527.8 394.5,525.8 396.6,591.1 331.5,593.1" fill="none" stroke="#7a300f" stroke-width="0.9" opacity="0.75"/>
<polygon points="335.7,533.4 388.8,531.8 390.5,585.5 337.2,587.2" fill="none" stroke="#7a300f" stroke-width="0.9" opacity="0.8"/>
<polygon points="454.6,523.9 520.1,521.9 522.6,587.0 456.9,589.1" fill="#d6775a"/>
<polygon points="460.8,529.5 514.4,527.8 516.4,581.4 462.6,583.2" fill="#d97b5c"/>
<polygon points="460.8,529.5 514.4,527.8 516.4,581.4 462.6,583.2" fill="url(#stripe)"/>
<polygon points="454.6,523.9 520.1,521.9 522.6,587.0 456.9,589.1" fill="none" stroke="#7a300f" stroke-width="0.9" opacity="0.75"/>
<polygon points="460.8,529.5 514.4,527.8 516.4,581.4 462.6,583.2" fill="none" stroke="#7a300f" stroke-width="0.9" opacity="0.8"/>
<polygon points="580.7,520.0 646.6,517.9 649.5,583.0 583.4,585.1" fill="#d6775a"/>
<polygon points="586.9,525.6 640.9,523.9 643.3,577.4 589.1,579.1" fill="#d97b5c"/>
<polygon points="586.9,525.6 640.9,523.9 643.3,577.4 589.1,579.1" fill="url(#stripe)"/>
<polygon points="580.7,520.0 646.6,517.9 649.5,583.0 583.4,585.1" fill="none" stroke="#7a300f" stroke-width="0.9" opacity="0.75"/>
<polygon points="586.9,525.6 640.9,523.9 643.3,577.4 589.1,579.1" fill="none" stroke="#7a300f" stroke-width="0.9" opacity="0.8"/>
<polygon points="707.2,516.1 772.7,514.0 776.1,578.9 710.4,581.0" fill="#d6775a"/>
<polygon points="713.4,521.6 767.1,520.0 769.9,573.3 716.0,575.1" fill="#d97b5c"/>
<polygon points="713.4,521.6 767.1,520.0 769.9,573.3 716.0,575.1" fill="url(#stripe)"/>
<polygon points="707.2,516.1 772.7,514.0 776.1,578.9 710.4,581.0" fill="none" stroke="#7a300f" stroke-width="0.9" opacity="0.75"/>
<polygon points="713.4,521.6 767.1,520.0 769.9,573.3 716.0,575.1" fill="none" stroke="#7a300f" stroke-width="0.9" opacity="0.8"/>
<polygon points="195.3,402.9 644.7,389.7 648.0,464.3 196.8,478.0" fill="#d97b5c"/>
<polygon points="195.3,402.9 644.7,389.7 648.0,464.3 196.8,478.0" fill="url(#stripe)"/>
<polygon points="195.3,402.9 644.7,389.7 648.0,464.3 196.8,478.0" fill="none" stroke="#7a300f" stroke-width="0.9" opacity="0.8"/>
<g fill="none" stroke="#8a3a18" stroke-width="0.9" transform="rotate(-1.6 315 437)">
<rect x="242" y="405" width="72" height="64" rx="26" ry="24"/>
<rect x="305" y="403.5" width="85" height="65" rx="30" ry="25" fill="#d97b5c"/>
<rect x="305" y="403.5" width="85" height="65" rx="30" ry="25" fill="url(#stripe)"/>
<path d="M269 426 H300 V430 L276 454 H300.5 V458.5 H268.5 V454.5 L292.5 430.5 H269 Z"/>
<path d="M274 416.5 L277 415 L284.5 419.5 L292 415 L295 416.5 L284.5 423 Z"/>
<path d="M328.5 425 H334.5 L347.5 451 L360.5 425 H366.5 L350 457.5 H345 Z"/>
</g>
<path d="M427.9 412.9 C428.1 412.9 431.0 422.8 435.6 425.8 C440.2 428.9 447.9 430.6 455.8 431.2 C463.7 431.8 473.8 430.9 483.2 429.4 C492.6 427.9 503.4 424.9 512.5 422.1 C521.6 419.4 530.8 415.5 538.1 412.9 C545.4 410.3 550.9 408.1 556.4 406.5 C561.9 404.9 567.0 403.5 571.0 403.4 C575.0 403.2 577.8 404.5 580.2 405.6 C582.7 406.7 583.3 409.0 585.7 410.2 C588.1 411.4 591.8 412.8 594.8 412.9 C597.8 413.0 601.3 412.0 604.0 411.1 C606.7 410.2 609.9 408.9 611.0 407.5 C612.1 406.1 609.9 404.2 610.6 402.9 C611.3 401.5 613.4 399.7 615.0 399.4 C616.6 399.1 619.2 399.6 620.1 401.0 C621.0 402.4 621.4 405.2 620.5 407.5 C619.6 409.8 617.8 412.8 615.0 414.8 C612.2 416.8 607.0 417.8 604.0 419.3 C601.0 420.8 598.8 421.3 596.7 423.9 C594.6 426.5 594.0 431.7 591.2 434.9 C588.5 438.1 586.0 440.5 580.2 443.1 C574.4 445.7 564.9 449.0 556.4 450.5 C547.9 452.0 539.7 452.5 529.0 452.3 C518.3 452.1 503.1 450.7 492.4 449.5 C481.7 448.3 473.1 447.1 464.9 445.0 C456.6 442.9 448.4 439.9 442.9 436.7 C437.4 433.5 434.5 429.8 432.0 425.8 C429.5 421.8 427.7 412.9 427.9 412.9 Z" fill="#d97b5c"/>
<path d="M427.9 412.9 C428.1 412.9 431.0 422.8 435.6 425.8 C440.2 428.9 447.9 430.6 455.8 431.2 C463.7 431.8 473.8 430.9 483.2 429.4 C492.6 427.9 503.4 424.9 512.5 422.1 C521.6 419.4 530.8 415.5 538.1 412.9 C545.4 410.3 550.9 408.1 556.4 406.5 C561.9 404.9 567.0 403.5 571.0 403.4 C575.0 403.2 577.8 404.5 580.2 405.6 C582.7 406.7 583.3 409.0 585.7 410.2 C588.1 411.4 591.8 412.8 594.8 412.9 C597.8 413.0 601.3 412.0 604.0 411.1 C606.7 410.2 609.9 408.9 611.0 407.5 C612.1 406.1 609.9 404.2 610.6 402.9 C611.3 401.5 613.4 399.7 615.0 399.4 C616.6 399.1 619.2 399.6 620.1 401.0 C621.0 402.4 621.4 405.2 620.5 407.5 C619.6 409.8 617.8 412.8 615.0 414.8 C612.2 416.8 607.0 417.8 604.0 419.3 C601.0 420.8 598.8 421.3 596.7 423.9 C594.6 426.5 594.0 431.7 591.2 434.9 C588.5 438.1 586.0 440.5 580.2 443.1 C574.4 445.7 564.9 449.0 556.4 450.5 C547.9 452.0 539.7 452.5 529.0 452.3 C518.3 452.1 503.1 450.7 492.4 449.5 C481.7 448.3 473.1 447.1 464.9 445.0 C456.6 442.9 448.4 439.9 442.9 436.7 C437.4 433.5 434.5 429.8 432.0 425.8 C429.5 421.8 427.7 412.9 427.9 412.9 Z" fill="url(#stripe2)" stroke="#7a3414" stroke-width="0.9"/>
<path d="M596.7 423.9 L591.2 434.9 L580.2 443.1 L556.4 450.5 L529.0 452.3 L492.4 449.5 L464.9 445.0 L442.9 436.7 L432.0 425.8 L427.9 412.9" fill="none" stroke="#6a2a0e" stroke-width="1.3" stroke-linejoin="round" opacity="0.75"/>
</g>
</svg>
<div class="a" style="left:4px;top:67px;width:266px;height:233px;background:rgba(31,31,31,0.6)"></div>
<div class="a" style="left:8px;top:93.6px;width:259px;height:1px;background:#e8702c"></div>
<div class="a" style="left:8px;top:238.8px;width:259px;height:1.4px;background:#f4f4f4"></div>
<div class="a" style="left:12px;top:272px;width:67px;height:20.7px;background:#c96c3d"></div>
<div class="a" style="left:13px;top:99.0px;width:13px;height:13px;background:#ff7d38"></div>
<div class="a" style="left:185.2px;top:99.5px;width:8.0px;height:12px;background:#fb8138"></div>
<div class="a" style="left:13px;top:118.0px;width:13px;height:13px;background:#b03029"></div>
<div class="a" style="left:185.2px;top:118.5px;width:10.0px;height:12px;background:#fb8138"></div>
<div class="a" style="left:13px;top:137.0px;width:13px;height:13px;background:#9654cc"></div>
<div class="a" style="left:185.2px;top:137.5px;width:29.8px;height:12px;background:#fb8138"></div>
<div class="a" style="left:13px;top:156.0px;width:13px;height:13px;background:#f04040"></div>
<div class="a" style="left:185.2px;top:156.5px;width:26.6px;height:12px;background:#fb8138"></div>
<div class="a" style="left:13px;top:175.0px;width:13px;height:13px;background:#ff8c69"></div>
<div class="a" style="left:185.2px;top:175.5px;width:30.0px;height:12px;background:#fb8138"></div>
<div class="a" style="left:13px;top:194.0px;width:13px;height:13px;background:#ffffff"></div>
<div class="a" style="left:185.2px;top:194.5px;width:0.9px;height:12px;background:#fb8138"></div>
<div class="a" style="left:13px;top:213.0px;width:13px;height:13px;background:#00876e"></div>
<div class="a" style="left:185.2px;top:213.5px;width:2.0px;height:12px;background:#fb8138"></div>
<div class="a" style="left:4px;top:587px;width:139.5px;height:73px;background:rgba(30,30,30,0.6)"></div>
<div class="a" style="left:73.4px;top:592px;width:65.4px;height:64px;background:rgba(0,0,0,0.55)"></div>
<svg class="a" style="left:4px;top:587px" width="140" height="73" viewBox="4 587 140 73"><g fill="none" stroke="#fff" stroke-width="1.8" stroke-linejoin="round" stroke-linecap="round" opacity="0.95"><path d="M13 610.9 H54.4 V652.1 H13 Z"/><path d="M13 610.9 L28.8 596.1 H69 V636.7 L54.4 652.1 M54.4 610.9 L69 596.1"/></g><g fill="none" stroke="#fff" stroke-width="1.5" stroke-linejoin="round" stroke-linecap="round" opacity="0.95"><path d="M78.2 611.2 L94.2 597.5 H134.2 L119.5 611.2 Z"/><path d="M78.2 617.0 H119.5 L134.2 603.3"/><path d="M78.2 621.9 H119.5 L134.2 608.2"/><path d="M78.2 627.0 H119.5 L134.2 613.3"/><path d="M78.2 632.0 H119.5 L134.2 618.3"/><path d="M78.2 637.0 H119.5 L134.2 623.3"/><path d="M78.2 642.0 H119.5 L134.2 628.3"/><path d="M78.2 647.0 H119.5 L134.2 633.3"/><path d="M78.2 651.9 H119.5 L134.2 638.2"/></g></svg>
<svg class="a" style="left:832px;top:66px" width="112" height="648" viewBox="832 66 112 648">
<g stroke="#a9a9a9" stroke-width="1">
<path d="M873 97.4 H878 M896.3 97.4 H901.2"/>
<path d="M875.5 113.6 H878 M896.3 113.6 H898.6"/>
<path d="M873 129.8 H878 M896.3 129.8 H901.2"/>
<path d="M875.5 146.1 H878 M896.3 146.1 H898.6"/>
<path d="M875.5 162.3 H878 M896.3 162.3 H898.6"/>
<path d="M873 178.5 H878 M896.3 178.5 H901.2"/>
<path d="M875.5 194.7 H878 M896.3 194.7 H898.6"/>
<path d="M873 210.9 H878 M896.3 210.9 H901.2"/>
<path d="M875.5 227.2 H878 M896.3 227.2 H898.6"/>
<path d="M875.5 243.4 H878 M896.3 243.4 H898.6"/>
<path d="M873 259.6 H878 M896.3 259.6 H901.2"/>
<path d="M875.5 275.8 H878 M896.3 275.8 H898.6"/>
<path d="M873 292.0 H878 M896.3 292.0 H901.2"/>
<path d="M875.5 308.3 H878 M896.3 308.3 H898.6"/>
<path d="M875.5 324.5 H878 M896.3 324.5 H898.6"/>
<path d="M873 340.7 H878 M896.3 340.7 H901.2"/>
<path d="M875.5 356.9 H878 M896.3 356.9 H898.6"/>
<path d="M873 373.1 H878 M896.3 373.1 H901.2"/>
<path d="M875.5 389.4 H878 M896.3 389.4 H898.6"/>
<path d="M875.5 405.6 H878 M896.3 405.6 H898.6"/>
<path d="M873 421.8 H878 M896.3 421.8 H901.2"/>
<path d="M875.5 438.0 H878 M896.3 438.0 H898.6"/>
<path d="M873 454.2 H878 M896.3 454.2 H901.2"/>
<path d="M875.5 470.5 H878 M896.3 470.5 H898.6"/>
<path d="M875.5 486.7 H878 M896.3 486.7 H898.6"/>
<path d="M873 502.9 H878 M896.3 502.9 H901.2"/>
<path d="M875.5 519.1 H878 M896.3 519.1 H898.6"/>
<path d="M873 535.3 H878 M896.3 535.3 H901.2"/>
<path d="M875.5 551.6 H878 M896.3 551.6 H898.6"/>
<path d="M875.5 567.8 H878 M896.3 567.8 H898.6"/>
<path d="M873 584.0 H878 M896.3 584.0 H901.2"/>
<path d="M875.5 600.2 H878 M896.3 600.2 H898.6"/>
<path d="M873 616.4 H878 M896.3 616.4 H901.2"/>
<path d="M875.5 632.7 H878 M896.3 632.7 H898.6"/>
<path d="M875.5 648.9 H878 M896.3 648.9 H898.6"/>
<path d="M873 665.1 H878 M896.3 665.1 H901.2"/>
<path d="M875.5 681.3 H878 M896.3 681.3 H898.6"/>
</g>
<rect x="885.9" y="80" width="3.2" height="603" fill="#ea7b36"/>
<path d="M871.2 81.5 H903.3" stroke="#b8683c" stroke-width="1.1"/>
<path d="M880.8 80.6 L886.6 74.2 Q887.7 73.2 888.8 74.2 L894.6 80.6 Z" fill="#ed6b21"/>
<path d="M913.7 74.2 L919.6 77.6 V84.4 L913.7 87.8 L907.8 84.4 V77.6 Z" fill="#ed6b21"/>
<path d="M913.7 77.6 V84.4 M910.3 81 H917.1" stroke="#fff" stroke-width="1.7"/>
<path d="M880.6 681.6 H894.8 L888.6 687 Q887.7 687.8 886.8 687 Z" fill="#ed6b21"/>
<g fill="none" stroke="#ed6b21" stroke-width="1.6"><path d="M883.6 700.5 V697.6 Q883.6 694.8 886.4 694.8 H887.6 Q890.2 694.8 890.3 697"/></g><rect x="881.6" y="700" width="11" height="7.8" rx="0.8" fill="#ed6b21"/><rect x="884.8" y="703" width="3" height="2" fill="#fff"/>
<path d="M930.87 696.20 L931.12 695.06 L932.88 695.06 L933.13 696.20 L935.16 697.04 L936.14 696.41 L937.39 697.66 L936.76 698.64 L937.60 700.67 L938.74 700.92 L938.74 702.68 L937.60 702.93 L936.76 704.96 L937.39 705.94 L936.14 707.19 L935.16 706.56 L933.13 707.40 L932.88 708.54 L931.12 708.54 L930.87 707.40 L928.84 706.56 L927.86 707.19 L926.61 705.94 L927.24 704.96 L926.40 702.93 L925.26 702.68 L925.26 700.92 L926.40 700.67 L927.24 698.64 L926.61 697.66 L927.86 696.41 L928.84 697.04 Z" fill="#fdebd8" stroke="#7f7f7f" stroke-width="1.25" stroke-linejoin="round"/><circle cx="932.00" cy="701.80" r="3.74" fill="#fde3c6" stroke="#eaa26a" stroke-width="0.9"/>
</svg>
<div class="a" style="left:1363px;top:66px;width:1px;height:648px;background:#e6e6e6"></div>
<div class="btn" style="left:1017px;top:68px;width:102px;height:21px;background:#e4e4e4;border-color:#c4c4c4"></div>
<div class="btn" style="left:1121px;top:68px;width:87px;height:21px;background:#e4e4e4;border-color:#c4c4c4"></div>
<div class="btn" style="left:1210px;top:68px;width:77px;height:21px"></div>
<div class="a" style="left:1023.8px;top:73.3px;width:10.2px;height:10.2px;border-radius:50%;background:#6fdc2c"></div>
<div class="a" style="left:1128.4px;top:73.3px;width:10.2px;height:10.2px;border-radius:50%;background:#fad400"></div>
<svg class="a" style="left:1216.5px;top:72.7px" width="11" height="11" viewBox="-5.5 -5.5 11 11"><path d="M-2.2 -5.3 H2.2 L5.3 -2.2 V2.2 L2.2 5.3 H-2.2 L-5.3 2.2 V-2.2 Z" fill="#e40000"/></svg>
<div class="cmb" style="left:947px;top:107.3px;width:393px;height:23.4px"></div>
<svg class="a" style="left:1324.6px;top:115.9px" width="12" height="8" viewBox="0 0 12 8"><path d="M1.2 1.4 L6 6.2 L10.8 1.4" fill="none" stroke="#444" stroke-width="1.25"/></svg>
<svg class="a" style="left:1340.9px;top:107.9px" width="20" height="20" viewBox="1340.90 107.90 20 20"><path d="M1349.75 112.22 L1350.01 111.06 L1351.79 111.06 L1352.05 112.22 L1354.10 113.07 L1355.11 112.43 L1356.37 113.69 L1355.73 114.70 L1356.58 116.75 L1357.74 117.01 L1357.74 118.79 L1356.58 119.05 L1355.73 121.10 L1356.37 122.11 L1355.11 123.37 L1354.10 122.73 L1352.05 123.58 L1351.79 124.74 L1350.01 124.74 L1349.75 123.58 L1347.70 122.73 L1346.69 123.37 L1345.43 122.11 L1346.07 121.10 L1345.22 119.05 L1344.06 118.79 L1344.06 117.01 L1345.22 116.75 L1346.07 114.70 L1345.43 113.69 L1346.69 112.43 L1347.70 113.07 Z" fill="#fdebd8" stroke="#7f7f7f" stroke-width="1.25" stroke-linejoin="round"/><circle cx="1350.90" cy="117.90" r="3.80" fill="#fde3c6" stroke="#eaa26a" stroke-width="0.9"/></svg>
<div class="cmb" style="left:947px;top:150.0px;width:393px;height:23.4px"></div>
<svg class="a" style="left:1324.6px;top:158.6px" width="12" height="8" viewBox="0 0 12 8"><path d="M1.2 1.4 L6 6.2 L10.8 1.4" fill="none" stroke="#444" stroke-width="1.25"/></svg>
<svg class="a" style="left:1340.9px;top:150.6px" width="20" height="20" viewBox="1340.90 150.60 20 20"><path d="M1349.75 154.92 L1350.01 153.76 L1351.79 153.76 L1352.05 154.92 L1354.10 155.77 L1355.11 155.13 L1356.37 156.39 L1355.73 157.40 L1356.58 159.45 L1357.74 159.71 L1357.74 161.49 L1356.58 161.75 L1355.73 163.80 L1356.37 164.81 L1355.11 166.07 L1354.10 165.43 L1352.05 166.28 L1351.79 167.44 L1350.01 167.44 L1349.75 166.28 L1347.70 165.43 L1346.69 166.07 L1345.43 164.81 L1346.07 163.80 L1345.22 161.75 L1344.06 161.49 L1344.06 159.71 L1345.22 159.45 L1346.07 157.40 L1345.43 156.39 L1346.69 155.13 L1347.70 155.77 Z" fill="#fdebd8" stroke="#7f7f7f" stroke-width="1.25" stroke-linejoin="round"/><circle cx="1350.90" cy="160.60" r="3.80" fill="#fde3c6" stroke="#eaa26a" stroke-width="0.9"/></svg>
<div class="cmb" style="left:947px;top:193.2px;width:393px;height:23.4px"></div>
<svg class="a" style="left:1324.6px;top:201.8px" width="12" height="8" viewBox="0 0 12 8"><path d="M1.2 1.4 L6 6.2 L10.8 1.4" fill="none" stroke="#444" stroke-width="1.25"/></svg>
<svg class="a" style="left:1340.9px;top:193.8px" width="20" height="20" viewBox="1340.90 193.80 20 20"><path d="M1349.75 198.12 L1350.01 196.96 L1351.79 196.96 L1352.05 198.12 L1354.10 198.97 L1355.11 198.33 L1356.37 199.59 L1355.73 200.60 L1356.58 202.65 L1357.74 202.91 L1357.74 204.69 L1356.58 204.95 L1355.73 207.00 L1356.37 208.01 L1355.11 209.27 L1354.10 208.63 L1352.05 209.48 L1351.79 210.64 L1350.01 210.64 L1349.75 209.48 L1347.70 208.63 L1346.69 209.27 L1345.43 208.01 L1346.07 207.00 L1345.22 204.95 L1344.06 204.69 L1344.06 202.91 L1345.22 202.65 L1346.07 200.60 L1345.43 199.59 L1346.69 198.33 L1347.70 198.97 Z" fill="#fdebd8" stroke="#7f7f7f" stroke-width="1.25" stroke-linejoin="round"/><circle cx="1350.90" cy="203.80" r="3.80" fill="#fde3c6" stroke="#eaa26a" stroke-width="0.9"/></svg>
<svg class="a" style="left:956.2px;top:108.8px" width="20" height="20" viewBox="956.20 108.80 20 20"><path d="M965.10 113.37 L965.34 112.26 L967.06 112.26 L967.30 113.37 L969.26 114.18 L970.22 113.57 L971.43 114.78 L970.82 115.74 L971.63 117.70 L972.74 117.94 L972.74 119.66 L971.63 119.90 L970.82 121.86 L971.43 122.82 L970.22 124.03 L969.26 123.42 L967.30 124.23 L967.06 125.34 L965.34 125.34 L965.10 124.23 L963.14 123.42 L962.18 124.03 L960.97 122.82 L961.58 121.86 L960.77 119.90 L959.66 119.66 L959.66 117.94 L960.77 117.70 L961.58 115.74 L960.97 114.78 L962.18 113.57 L963.14 114.18 Z" fill="#fdebd8" stroke="#7f7f7f" stroke-width="1.25" stroke-linejoin="round"/><circle cx="966.20" cy="118.80" r="3.63" fill="#fde3c6" stroke="#eaa26a" stroke-width="0.9"/></svg>
<div class="a" style="left:954px;top:154px;width:24px;height:16px;background:#2a7dd3"></div>
<svg class="a" style="left:959.0px;top:198.0px" width="15" height="15" viewBox="0 0 15 15"><rect x="0.6" y="0.6" width="13" height="12.6" fill="#fff" stroke="#6e6e6e" stroke-width="1.2"/><rect x="0" y="11.8" width="14.2" height="2" fill="#6e6e6e"/><path d="M3.5 5.1 H13.4" stroke="#6e6e6e" stroke-width="1"/><circle cx="3.8" cy="5.1" r="2" fill="#ea7a35"/></svg>
<svg class="a" style="left:982.0px;top:198.0px" width="13" height="15" viewBox="0 0 13 15"><path d="M2.2 7 V1.2 H10 V7" fill="none" stroke="#727272" stroke-width="1.8"/><path d="M0.6 6.4 H11.6 L12 13.7 H0.2 Z" fill="#727272"/><path d="M6.1 8.8 L8.4 11.3 H3.8 Z" fill="#fff"/></svg>
<div class="btn" style="left:998px;top:224px;width:342px;height:22.5px"></div>
<svg class="a" style="left:1324.6px;top:232.0px" width="12" height="8" viewBox="0 0 12 8"><path d="M1.2 1.4 L6 6.2 L10.8 1.4" fill="none" stroke="#444" stroke-width="1.25"/></svg>
<div class="cmb" style="left:984px;top:250px;width:80px;height:22.6px"></div>
<svg class="a" style="left:1048.7px;top:258.2px" width="12" height="8" viewBox="0 0 12 8"><path d="M1.2 1.4 L6 6.2 L10.8 1.4" fill="none" stroke="#444" stroke-width="1.25"/></svg>
<div class="a" style="left:1121px;top:255px;width:13px;height:13px;border:1px solid #333;box-sizing:border-box;background:#fff"></div>
<svg class="a" style="left:1121px;top:255px" width="13" height="13" viewBox="0 0 13 13"><path d="M2.8 6.6 L5.4 9.3 L10.4 3.6" fill="none" stroke="#222" stroke-width="1.1"/></svg>
<div class="a" style="left:947px;top:279px;width:415px;height:219px;border:1px solid #a9a9a9;box-sizing:border-box;background:#fff"></div>
<div class="a" style="left:1148.5px;top:281px;width:1px;height:23px;background:#e5e5e5"></div>
<div class="a" style="left:1178.5px;top:281px;width:1px;height:23px;background:#e5e5e5"></div>
<div class="a" style="left:1359.3px;top:281px;width:1px;height:23px;background:#e5e5e5"></div>
<svg class="a" style="left:1155.0px;top:309.1px" width="18" height="14" viewBox="-9 -7 18 14"><path d="M-7 0 C-4.6 -4.6 4.6 -4.6 7 0 C4.6 4.6 -4.6 4.6 -7 0 Z" fill="#fff" stroke="#6c6c6c" stroke-width="1.6"/><circle cx="0" cy="0" r="2.1" fill="#6c6c6c"/></svg>
<svg class="a" style="left:1261.6px;top:309.8px" width="16" height="15" viewBox="0 0 16 15"><path d="M6 2.4 H2.2 Q1.2 2.4 1.2 3.4 V11.2 Q1.2 12.2 2.2 12.2 H9.8 Q10.8 12.2 10.8 11.2 V7.4" fill="none" stroke="#68727c" stroke-width="1.3"/><circle cx="9.9" cy="3.1" r="2.6" fill="#fff2dc" stroke="#e9a050" stroke-width="1.5"/></svg>
<div class="a" style="left:947px;top:510.5px;width:416px;height:158.5px;border:1px solid #dcdcdc;box-sizing:border-box"></div>
<div class="a" style="left:953px;top:505px;width:124px;height:12px;background:#fff"></div>
<div class="btn" style="left:948px;top:676.4px;width:413.5px;height:33px"></div>
<div class="btn" style="left:66.3px;top:674.3px;width:132.5px;height:22.2px"></div>
<svg class="a" style="left:183.4px;top:682.5px" width="12" height="8" viewBox="0 0 12 8"><path d="M1.2 1.4 L6 6.2 L10.8 1.4" fill="none" stroke="#444" stroke-width="1.25"/></svg>
<div class="btn" style="left:256.9px;top:674.3px;width:231.7px;height:22.2px"></div>
<svg class="a" style="left:473.8px;top:682.5px" width="12" height="8" viewBox="0 0 12 8"><path d="M1.2 1.4 L6 6.2 L10.8 1.4" fill="none" stroke="#444" stroke-width="1.25"/></svg>
<svg class="a" style="left:495px;top:674px" width="336" height="24" viewBox="495 674 336 24"><rect x="504" y="685" width="318" height="2.7" fill="#ea7b36"/><path d="M507.6 678.6 V692.2" stroke="#ed6b21" stroke-width="1.2"/><path d="M507 680.6 L501.3 685.6 Q500.5 686.3 501.3 687 L507 692 Z" fill="#ed6b21"/><path d="M818.4 678.6 V692.2" stroke="#ed6b21" stroke-width="1.2"/><path d="M819 680.6 L824.7 685.6 Q825.5 686.3 824.7 687 L819 692 Z" fill="#ed6b21"/></svg>
<div class="a" style="left:0;top:738px;width:1366px;height:30px;background:linear-gradient(90deg,#444545 0,#444545 470px,#2c3a2c 560px,#2a3b2a 680px,#2d3c2c 790px,#454646 870px,#454646 100%)"></div>
<div class="a" style="left:1361.5px;top:738px;width:4.5px;height:30px;background:#515151"></div>
<div class="a" style="left:186px;top:738px;width:36.6px;height:30px;background:#6b6b6b"></div>
<div class="a" style="left:79.0px;top:766.2px;width:28.0px;height:1.8px;background:#85c0f0"></div>
<div class="a" style="left:116.0px;top:766.2px;width:28.0px;height:1.8px;background:#85c0f0"></div>
<div class="a" style="left:153.0px;top:766.2px;width:28.0px;height:1.8px;background:#85c0f0"></div>
<div class="a" style="left:186.0px;top:766.2px;width:36.6px;height:1.8px;background:#85c0f0"></div>
<svg class="a" style="left:0;top:738px" width="1366" height="30" viewBox="0 738 1366 30"><g fill="#fff"><path d="M9.8 746.9 L16.6 745.9 V752.4 H9.8 Z"/><path d="M17.6 745.7 L26.6 744.4 V752.4 H17.6 Z"/><path d="M9.8 753.4 H16.6 V759.9 L9.8 758.9 Z"/><path d="M17.6 753.4 H26.6 V761.3 L17.6 760 Z"/></g><g fill="none" stroke="#fff" stroke-width="1.4"><rect x="48.2" y="748.6" width="8.8" height="8"/><path d="M45.6 745.6 H57.6 M45.6 759.6 H57.6 M47.2 745.6 V748 M56.6 745.6 V748 M47.2 757.4 V759.6 M56.6 757.4 V759.6"/><path d="M61.3 745.3 V747 M61.3 752 V759.9" stroke-width="1.7"/></g><rect x="60.3" y="748.3" width="2.2" height="2.4" fill="#fff"/><path d="M84.5 746.6 Q84.5 745.4 85.6 745.4 H90.6 L92.4 747.4 H100.4 Q101.5 747.4 101.5 748.5 V759.6 H84.5 Z" fill="#f4c64a"/><path d="M84.5 749.4 H101.5 V759.6 H84.5 Z" fill="#fbd969"/><path d="M87.8 752.6 H98.4 V759.6 H87.8 Z" fill="#3b8eda"/><path d="M90.6 756.2 H95.6 V759.6 H90.6 Z" fill="#a9d4f6"/><path d="M129.60 752.80 L122.67 748.80 A8.0 8.0 0 0 1 136.53 748.80 Z" fill="#e2433a"/><path d="M129.60 752.80 L136.53 748.80 A8.0 8.0 0 0 1 129.60 760.80 Z" fill="#f7c93e"/><path d="M129.60 752.80 L129.60 760.80 A8.0 8.0 0 0 1 122.67 748.80 Z" fill="#2fa24c"/><circle cx="129.6" cy="752.8" r="3.7" fill="#fff"/><circle cx="129.6" cy="752.8" r="2.8" fill="#4a8bf0"/><path d="M160 756 C158.6 751 162.6 746.6 167.6 746.8 C171.4 747 173 749.6 172.4 752.6 C172 754.6 169.6 754.6 169.4 756.4 C169.2 758.4 167.8 760 165.2 759.8 C162.4 759.6 160.6 758.2 160 756 Z" fill="#dfeaf6"/><circle cx="163" cy="752" r="1.4" fill="#e5523f"/><circle cx="166.6" cy="749.8" r="1.4" fill="#f1c232"/><circle cx="162.8" cy="756" r="1.3" fill="#3e9be0"/><circle cx="170" cy="751" r="1.3" fill="#5db85d"/><path d="M172.6 745.2 L174.6 745.4 L174.2 759.4 L172.4 759.4 Z" fill="#e8912d"/><rect x="172" y="750" width="2.8" height="2" fill="#c9c9c9"/><circle cx="203.7" cy="752.8" r="8.6" fill="#fff"/><g transform="translate(199.6 746.7) scale(0.86)"><clipPath id="lg2"><path d="M5.6 0.2 C8.6 0.2 9.6 3.4 9 6.6 C8.5 9.6 6.6 12.6 3.6 12.4 C0.8 12.2 0 9 0.6 6 C1.2 3 2.8 0.2 5.6 0.2 Z"/></clipPath><g clip-path="url(#lg2)"><rect width="10" height="14" fill="#ed6b21"/><path d="M-1 -1 H10.5 L0.3 10.6 L-1 10 Z" fill="#2e3233"/></g></g><circle cx="1071.6" cy="750.4" r="5.4" fill="#f3c545"/><path d="M1068.6 760.2 C1064.4 760.2 1063.6 754.8 1067.6 753.8 C1068 749.6 1074.4 748.2 1076.6 752 C1080 750.6 1083 753 1082.4 755.2 C1086.4 755.4 1086.6 760.2 1082.6 760.2 Z" fill="#dcecf8"/><path d="M1068.6 760.2 C1065.4 760.2 1064.4 757.4 1066 755.6 C1070 758.6 1080 758.8 1085 757.2 C1085.6 758.8 1084.6 760.2 1082.6 760.2 Z" fill="#a8cdee"/><path d="M1208.4 756.4 L1214.2 750.4 L1220 756.4" fill="none" stroke="#fff" stroke-width="1.4"/><g fill="none" stroke="#fff" stroke-width="1.3"><path d="M1233.6 759.6 A12.2 12.2 0 0 1 1245.8 747.6"/><path d="M1237.4 759.6 A8.6 8.6 0 0 1 1245.8 751.2"/><path d="M1241 759.6 A5 5 0 0 1 1245.8 754.8"/></g><rect x="1243.4" y="757.2" width="2.6" height="2.6" fill="#fff"/><g fill="none" stroke="#fff" stroke-width="1.2"><path d="M1254.2 750.6 H1257 L1260.4 747.2 V759 L1257 755.6 H1254.2 Z"/><path d="M1262.6 750.6 Q1264.4 753.1 1262.6 755.6"/><path d="M1265 748.6 Q1268.2 753.1 1265 757.6"/><path d="M1267.4 746.6 Q1272 753.1 1267.4 759.6"/></g><path d="M1325.6 746.6 H1341 V757.4 H1335.6 L1333.2 760 L1330.8 757.4 H1325.6 Z" fill="none" stroke="#fff" stroke-width="1.3"/></svg>
<span class="t" style="left:22.9px;top:3.6px;font-size:12px;color:#000;letter-spacing:-0.254px;">Fantabulous Leelo (29) - PrusaSlicer-2.3.3 založený na Slic3r</span>
<span class="t" style="left:6.6px;top:25.2px;font-size:12px;color:#000;letter-spacing:-0.040px;"><u>S</u>oubor</span>
<span class="t" style="left:58.6px;top:25.2px;font-size:12px;color:#000;letter-spacing:0.083px;"><u>E</u>ditovat</span>
<span class="t" style="left:115.6px;top:25.2px;font-size:12px;color:#000;letter-spacing:0.199px;"><u>O</u>kno</span>
<span class="t" style="left:158.3px;top:25.2px;font-size:12px;color:#000;letter-spacing:-0.111px;"><u>Z</u>obrazení</span>
<span class="t" style="left:224.8px;top:25.2px;font-size:12px;color:#000;letter-spacing:0.070px;"><u>K</u>onfigurace</span>
<span class="t" style="left:302.8px;top:25.2px;font-size:12px;color:#000;letter-spacing:0.253px;"><u>P</u>omoc</span>
<span class="t" style="left:7.5px;top:46.3px;font-size:12px;color:#000;letter-spacing:-0.090px;">Podložka</span>
<span class="t" style="left:67.5px;top:48.0px;font-size:12px;color:#000;letter-spacing:-0.114px;">Nastavení tisku</span>
<span class="t" style="left:159.8px;top:48.0px;font-size:12px;color:#000;letter-spacing:0.034px;">Nastavení filamentu</span>
<span class="t" style="left:277.6px;top:48.0px;font-size:12px;color:#000;letter-spacing:-0.098px;">Nastavení tiskárny</span>
<span class="t" style="left:12.4px;top:75.2px;font-size:11.2px;color:#fff;letter-spacing:0.267px;">Typ</span>
<span class="t" style="left:141.3px;top:75.2px;font-size:11.2px;color:#fff;letter-spacing:-0.557px;">Čas</span>
<span class="t" style="left:184.6px;top:75.2px;font-size:11.2px;color:#fff;letter-spacing:0.285px;">Procentuálně</span>
<span class="t" style="left:34.4px;top:97.7px;font-size:11.2px;color:#fff;letter-spacing:0.274px;">Vnější perimetr</span>
<span class="t" style="left:141.3px;top:97.7px;font-size:11.2px;color:#fff;letter-spacing:0.339px;">29m</span>
<span class="t" style="left:222.7px;top:97.7px;font-size:11.2px;color:#fff;letter-spacing:-0.168px;">7.4%</span>
<span class="t" style="left:34.4px;top:116.7px;font-size:11.2px;color:#fff;letter-spacing:0.340px;">Vnitřní výplň</span>
<span class="t" style="left:141.3px;top:116.7px;font-size:11.2px;color:#fff;letter-spacing:0.339px;">37m</span>
<span class="t" style="left:222.7px;top:116.7px;font-size:11.2px;color:#fff;letter-spacing:-0.168px;">9.5%</span>
<span class="t" style="left:34.4px;top:135.7px;font-size:11.2px;color:#fff;letter-spacing:0.230px;">Plná výplň</span>
<span class="t" style="left:141.3px;top:135.7px;font-size:11.2px;color:#fff;letter-spacing:0.310px;">1h48m</span>
<span class="t" style="left:222.7px;top:135.7px;font-size:11.2px;color:#fff;letter-spacing:-0.138px;">27.7%</span>
<span class="t" style="left:34.4px;top:154.7px;font-size:11.2px;color:#fff;letter-spacing:0.256px;">Vrchní plné výplně</span>
<span class="t" style="left:141.3px;top:154.7px;font-size:11.2px;color:#fff;letter-spacing:0.310px;">1h36m</span>
<span class="t" style="left:222.7px;top:154.7px;font-size:11.2px;color:#fff;letter-spacing:-0.138px;">24.7%</span>
<span class="t" style="left:34.4px;top:173.7px;font-size:11.2px;color:#fff;letter-spacing:0.707px;">Ironing</span>
<span class="t" style="left:141.3px;top:173.7px;font-size:11.2px;color:#fff;letter-spacing:0.310px;">1h49m</span>
<span class="t" style="left:222.7px;top:173.7px;font-size:11.2px;color:#fff;letter-spacing:-0.138px;">28.0%</span>
<span class="t" style="left:34.4px;top:192.7px;font-size:11.2px;color:#fff;letter-spacing:0.218px;">Výplň tenkých stěn</span>
<span class="t" style="left:141.3px;top:192.7px;font-size:11.2px;color:#fff;letter-spacing:0.578px;">2m</span>
<span class="t" style="left:222.7px;top:192.7px;font-size:11.2px;color:#fff;letter-spacing:-0.168px;">0.6%</span>
<span class="t" style="left:34.4px;top:211.7px;font-size:11.2px;color:#fff;letter-spacing:0.438px;">Obrys</span>
<span class="t" style="left:141.3px;top:211.7px;font-size:11.2px;color:#fff;letter-spacing:0.578px;">7m</span>
<span class="t" style="left:222.7px;top:211.7px;font-size:11.2px;color:#fff;letter-spacing:-0.168px;">1.9%</span>
<span class="t" style="left:12.2px;top:250.2px;font-size:11.2px;color:#fff;letter-spacing:0.202px;">Odhadovaný čas tisku [Normální režim]:</span>
<span class="t" style="left:226.6px;top:250.2px;font-size:11.2px;color:#fff;letter-spacing:0.465px;">6h29m</span>
<span class="t" style="left:15.9px;top:274.6px;font-size:11.2px;color:#fff;letter-spacing:0.203px;">Tichý režim</span>
<span class="t" style="left:849.1px;top:66.8px;font-size:12px;color:#000;letter-spacing:-0.646px;">7.60</span>
<span class="t" style="left:849.1px;top:82.2px;font-size:12px;color:#000;letter-spacing:-0.470px;">(38)</span>
<span class="t" style="left:903.6px;top:87.9px;font-size:12px;color:#b4b4b4;letter-spacing:-0.388px;">7.40</span>
<span class="t" style="left:903.6px;top:120.3px;font-size:12px;color:#b4b4b4;letter-spacing:-0.388px;">7.00</span>
<span class="t" style="left:903.6px;top:168.9px;font-size:12px;color:#b4b4b4;letter-spacing:-0.388px;">6.40</span>
<span class="t" style="left:903.6px;top:201.3px;font-size:12px;color:#b4b4b4;letter-spacing:-0.388px;">6.00</span>
<span class="t" style="left:903.6px;top:249.9px;font-size:12px;color:#b4b4b4;letter-spacing:-0.388px;">5.40</span>
<span class="t" style="left:903.6px;top:282.3px;font-size:12px;color:#b4b4b4;letter-spacing:-0.388px;">5.00</span>
<span class="t" style="left:903.6px;top:330.9px;font-size:12px;color:#b4b4b4;letter-spacing:-0.388px;">4.40</span>
<span class="t" style="left:903.6px;top:363.3px;font-size:12px;color:#b4b4b4;letter-spacing:-0.388px;">4.00</span>
<span class="t" style="left:903.6px;top:411.9px;font-size:12px;color:#b4b4b4;letter-spacing:-0.388px;">3.40</span>
<span class="t" style="left:903.6px;top:444.3px;font-size:12px;color:#b4b4b4;letter-spacing:-0.388px;">3.00</span>
<span class="t" style="left:903.6px;top:492.9px;font-size:12px;color:#b4b4b4;letter-spacing:-0.388px;">2.40</span>
<span class="t" style="left:903.6px;top:525.3px;font-size:12px;color:#b4b4b4;letter-spacing:-0.388px;">2.00</span>
<span class="t" style="left:903.6px;top:573.9px;font-size:12px;color:#b4b4b4;letter-spacing:-0.388px;">1.40</span>
<span class="t" style="left:903.6px;top:606.3px;font-size:12px;color:#b4b4b4;letter-spacing:-0.388px;">1.00</span>
<span class="t" style="left:903.6px;top:654.9px;font-size:12px;color:#b4b4b4;letter-spacing:-0.388px;">0.40</span>
<span class="t" style="left:903.9px;top:664.6px;font-size:12px;color:#000;letter-spacing:-0.446px;">0.20</span>
<span class="t" style="left:903.9px;top:680.2px;font-size:12px;color:#000;letter-spacing:-0.349px;">(1)</span>
<span class="t" style="left:1043.8px;top:70.3px;font-size:12px;color:#a2a2a2;letter-spacing:0.051px;">Jednoduchý</span>
<span class="t" style="left:1148.8px;top:70.3px;font-size:12px;color:#a2a2a2;letter-spacing:0.060px;">Pokročilý</span>
<span class="t" style="left:1238.6px;top:70.3px;font-size:12px;color:#000;font-weight:700;letter-spacing:-0.011px;">Expert</span>
<span class="t" style="left:947.0px;top:90.3px;font-size:12px;color:#000;letter-spacing:-0.153px;">Nastavení tisku :</span>
<span class="t" style="left:1000.8px;top:111.1px;font-size:12px;color:#000;letter-spacing:-0.332px;">Pretty PETG V3 (upraveno)</span>
<span class="t" style="left:947.0px;top:133.0px;font-size:12px;color:#000;letter-spacing:-0.051px;">Filament :</span>
<span class="t" style="left:1000.8px;top:154.0px;font-size:12px;color:#000;letter-spacing:-0.332px;">Pretty PETG V3 (upraveno)</span>
<span class="t" style="left:947.0px;top:176.0px;font-size:12px;color:#000;letter-spacing:-0.300px;">Tiskárna :</span>
<span class="t" style="left:1000.8px;top:197.1px;font-size:12px;color:#000;letter-spacing:-0.220px;">Original Prusa i3 MK3S &amp; MK3S+</span>
<span class="t" style="left:947.4px;top:227.3px;font-size:12px;color:#000;letter-spacing:-0.031px;">Podpěry:</span>
<span class="t" style="left:1001.9px;top:227.3px;font-size:12px;color:#000;letter-spacing:0.104px;">Žádné</span>
<span class="t" style="left:947.4px;top:253.4px;font-size:12px;color:#000;letter-spacing:0.171px;">Výplň:</span>
<span class="t" style="left:990.1px;top:253.4px;font-size:12px;color:#000;letter-spacing:-0.687px;">100%</span>
<span class="t" style="left:1082.6px;top:253.4px;font-size:12px;color:#000;letter-spacing:-0.039px;">Límec:</span>
<span class="t" style="left:954.8px;top:284.9px;font-size:12px;color:#000;letter-spacing:-0.292px;">Název</span>
<span class="t" style="left:1249.8px;top:285.3px;font-size:12px;color:#000;letter-spacing:-0.174px;">Editace</span>
<span class="t" style="left:967.6px;top:308.1px;font-size:12px;color:#000;letter-spacing:-0.155px;">Fantabulous Leelo (29).stl</span>
<span class="t" style="left:956.0px;top:503.2px;font-size:12px;color:#000;font-weight:700;letter-spacing:-0.196px;">Informace o slicování</span>
<span class="t" style="left:951.9px;top:519.9px;font-size:12px;color:#000;letter-spacing:0.040px;">Použito Filamentu (m)</span>
<span class="t" style="left:1100.3px;top:519.9px;font-size:12px;color:#000;letter-spacing:-0.651px;">14.07</span>
<span class="t" style="left:951.9px;top:540.9px;font-size:12px;color:#000;letter-spacing:0.083px;">Použito Filamentu (mm<span style='font-size:8px;position:relative;top:-4px'>3</span>)</span>
<span class="t" style="left:1099.8px;top:540.9px;font-size:12px;color:#000;letter-spacing:-0.622px;">33833.15</span>
<span class="t" style="left:951.9px;top:562.1px;font-size:12px;color:#000;letter-spacing:0.022px;">Použito Filamentu (g)</span>
<span class="t" style="left:1100.3px;top:562.1px;font-size:12px;color:#000;letter-spacing:-0.538px;">42.29 (242.29)</span>
<span class="t" style="left:970.0px;top:577.2px;font-size:12px;color:#000;letter-spacing:-0.083px;">(včetně cívky)</span>
<span class="t" style="left:951.9px;top:597.5px;font-size:12px;color:#000;letter-spacing:0.022px;">Náklady</span>
<span class="t" style="left:1100.3px;top:597.5px;font-size:12px;color:#000;letter-spacing:-0.651px;">25.37</span>
<span class="t" style="left:951.9px;top:618.9px;font-size:12px;color:#000;letter-spacing:-0.103px;">Odhadovaný čas tisku:</span>
<span class="t" style="left:961.1px;top:634.3px;font-size:12px;color:#000;letter-spacing:0.091px;">- normální režim</span>
<span class="t" style="left:1100.3px;top:634.3px;font-size:12px;color:#000;letter-spacing:-0.201px;">6h29m</span>
<span class="t" style="left:961.1px;top:649.0px;font-size:12px;color:#000;letter-spacing:0.114px;">- tichý režim</span>
<span class="t" style="left:1100.3px;top:649.0px;font-size:12px;color:#000;letter-spacing:-0.201px;">6h30m</span>
<span class="t" style="left:1100.8px;top:684.9px;font-size:12px;color:#000;font-weight:700;letter-spacing:-0.058px;">Exportovat G-code</span>
<span class="t" style="left:8.5px;top:678.0px;font-size:12px;color:#000;letter-spacing:-0.180px;">Zobrazení</span>
<span class="t" style="left:70.0px;top:678.0px;font-size:12px;color:#000;letter-spacing:-0.498px;">Typ</span>
<span class="t" style="left:208.8px;top:678.0px;font-size:12px;color:#000;letter-spacing:0.059px;">Zobrazit</span>
<span class="t" style="left:262.0px;top:678.0px;font-size:12px;color:#000;letter-spacing:0.276px;">Volby</span>
<span class="t" style="left:780.5px;top:661.6px;font-size:12px;color:#000;letter-spacing:-0.554px;">399873</span>
<span class="t" style="left:508.2px;top:694.6px;font-size:12px;color:#000;letter-spacing:-0.499px;">395341</span>
<span class="t" style="left:1.8px;top:719.6px;font-size:12px;color:#000;letter-spacing:-0.067px;">Slicování dokončeno...</span>
<span class="t" style="left:1094.7px;top:745.1px;font-size:14.5px;color:#fff;letter-spacing:-0.524px;">21°C</span>
<span class="t" style="left:1132.4px;top:745.1px;font-size:14.5px;color:#fff;letter-spacing:-0.525px;">Blíží se d...</span>
<span class="t" style="left:1280.0px;top:744.9px;font-size:12px;color:#fff;letter-spacing:-0.496px;">15:27</span>
</body></html>
